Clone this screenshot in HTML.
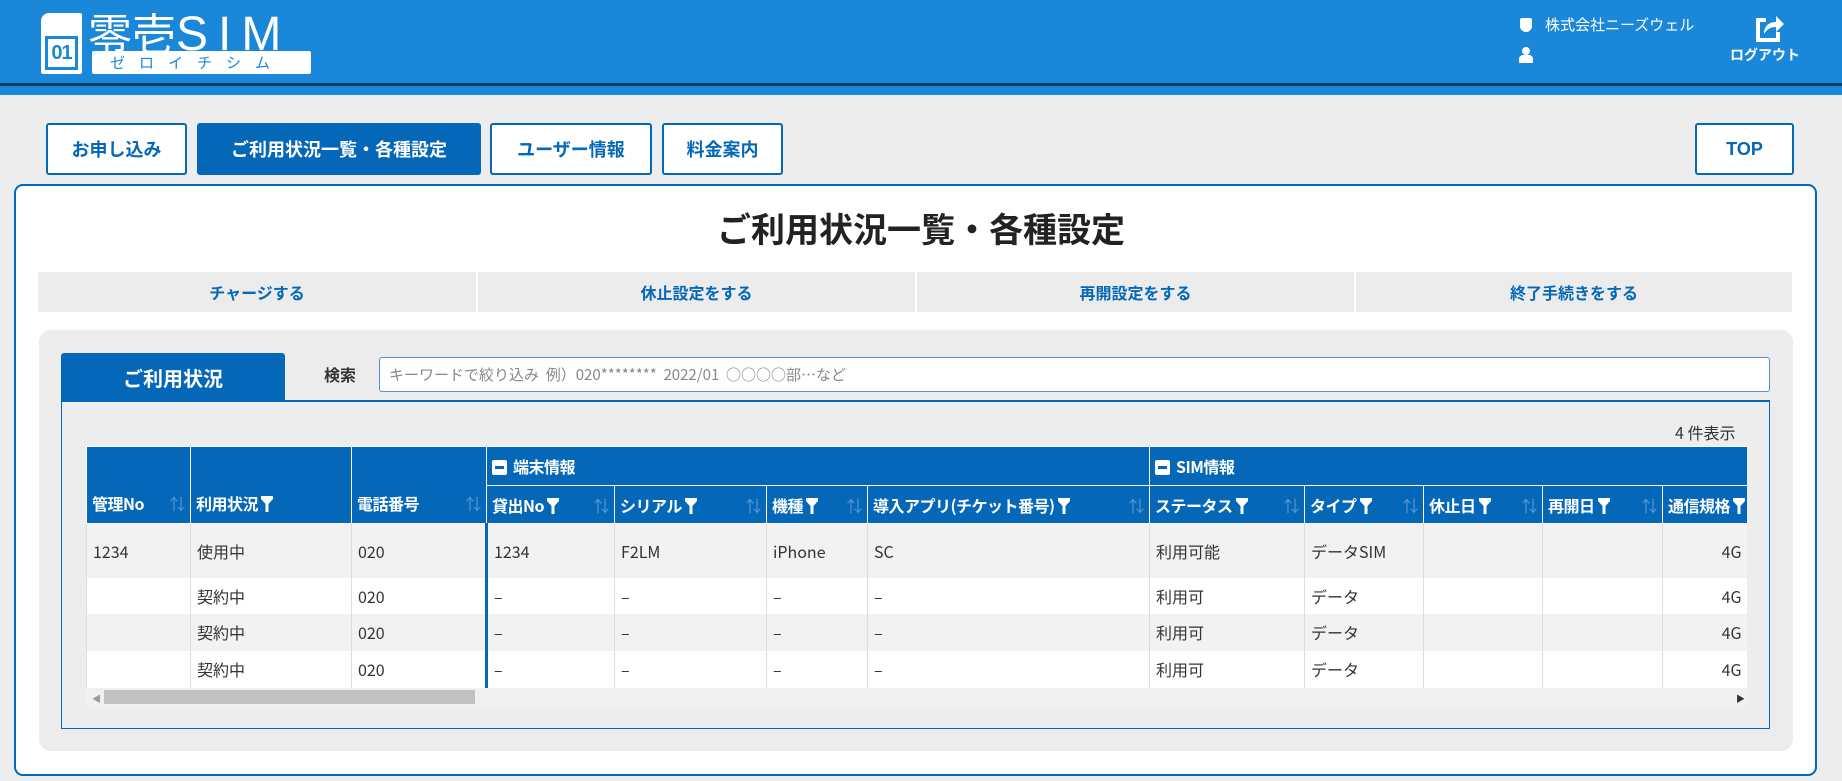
<!DOCTYPE html>
<html><head><meta charset="utf-8"><style>
*{box-sizing:border-box;margin:0;padding:0}
body{width:1842px;height:781px;background:#ededed;font-family:"Noto Sans CJK JP","Liberation Sans",sans-serif;position:relative;overflow:hidden;color:#333}
.a{position:absolute}
.hdr{left:0;top:0;width:1842px;height:83px;background:#1b87d8}
.btn{position:absolute;top:123px;height:52px;border:2px solid #0567b8;border-radius:3px;background:#fff;color:#0567b8;font-weight:bold;font-size:18px;display:flex;align-items:center;justify-content:center}
.btn.on{background:#0567b8;color:#fff}
.bar div{position:absolute;top:0;height:40px;background:#ececec;color:#0567b8;font-weight:bold;font-size:16px;display:flex;align-items:center;justify-content:center}
table{border-collapse:collapse;position:absolute;left:86px;top:446px;table-layout:fixed;width:1661px}
th{background:#0567b8;color:#fff;font-size:16px;font-weight:bold;text-align:left;padding:0 5px;border:1px solid #fff;white-space:nowrap;overflow:hidden;letter-spacing:-0.5px}
td{font-size:16px;line-height:20px;padding:0 6px;border-left:1px solid #ddd;white-space:nowrap;overflow:hidden;color:#333}
tr.g td{background:#f2f2f2}tr.w td{background:#fff}
.s{color:#5a9ad0;font-weight:normal;float:right}
.fn{display:inline-block;width:12px;height:16px;vertical-align:-2px;margin-left:3px}
.m{display:inline-block;width:15px;height:15px;background:#fff;border-radius:2px;vertical-align:-2px;margin-right:6px;position:relative}
.m:after{content:"";position:absolute;left:3px;top:6px;width:9px;height:3px;background:#0567b8}
</style></head><body>
<svg width="0" height="0" style="position:absolute"><defs><symbol id="fu" viewBox="0 0 12 16"><path d="M0 0h12v3L7.5 8v8h-3V8L0 3z" fill="#fff"/></symbol></defs></svg>
<div class="a hdr"></div>
<div class="a" style="left:0;top:83px;width:1842px;height:3px;background:#0d3f66"></div>
<div class="a" style="left:0;top:86px;width:1842px;height:9px;background:#1b87d8"></div>
<!-- logo -->
<div class="a" style="left:41px;top:13px;width:41px;height:61px;background:#fff;border-radius:8px 2px 2px 2px"></div>
<div class="a" style="left:45px;top:36px;width:33px;height:34px;border:3px solid #1b87d8;color:#1b87d8;font-weight:bold;font-size:20px;line-height:28px;text-align:center;letter-spacing:-1px;font-family:'Liberation Sans',sans-serif">01</div>
<div class="a" style="left:88px;top:6px;font-size:44px;color:#fff;line-height:50px;letter-spacing:0px">零壱<span style="font-family:'Liberation Sans',sans-serif;font-weight:normal;letter-spacing:10px;font-size:48px">SIM</span></div>
<div class="a" style="left:92px;top:51px;width:219px;height:23px;background:#fff;border-radius:2px;color:#1b87d8;font-size:15px;line-height:23px;letter-spacing:14px;padding-left:18px">ゼロイチシム</div>
<!-- user -->
<div class="a" style="left:1520px;top:18px;width:12px;height:14px;background:#fff;border-radius:2px 2px 6px 6px"></div>
<div class="a" style="left:1545px;top:14px;color:#fff;font-size:15px">株式会社ニーズウェル</div>
<div class="a" style="left:1522px;top:47px;width:8px;height:8px;background:#fff;border-radius:50%"></div>
<div class="a" style="left:1519px;top:55px;width:14px;height:8px;background:#fff;border-radius:4px 4px 1px 1px"></div>
<svg class="a" style="left:1752px;top:12px" width="32" height="32" viewBox="0 0 32 32"><path d="M4 6h10v4H8v16h16v-6h4v10H4z" fill="#fff"/><path d="M12 22c0-8 5-12 12-12V4l8 8-8 8v-5c-5 0-9 2-12 7z" fill="#fff"/></svg>
<div class="a" style="left:1730px;top:45px;color:#fff;font-size:14px;font-weight:bold">ログアウト</div>
<!-- nav -->
<div class="btn" style="left:46px;width:141px">お申し込み</div>
<div class="btn on" style="left:197px;width:284px">ご利用状況一覧・各種設定</div>
<div class="btn" style="left:490px;width:162px">ユーザー情報</div>
<div class="btn" style="left:662px;width:121px">料金案内</div>
<div class="btn" style="left:1695px;width:99px;font-family:'Liberation Sans',sans-serif">TOP</div>
<!-- card -->
<div class="a" style="left:14px;top:184px;width:1803px;height:592px;background:#fff;border:2px solid #0567b8;border-radius:9px"></div>
<div class="a" style="left:0;top:203px;width:1842px;text-align:center;font-size:34px;font-weight:bold;color:#222">ご利用状況一覧・各種設定</div>
<div class="a bar" style="left:38px;top:272px">
<div style="left:0;width:438px">チャージする</div>
<div style="left:440px;width:437px">休止設定をする</div>
<div style="left:879px;width:437px">再開設定をする</div>
<div style="left:1318px;width:436px">終了手続きをする</div>
</div>
<div class="a" style="left:39px;top:330px;width:1754px;height:421px;background:#ececec;border-radius:12px"></div>
<div class="a" style="left:61px;top:353px;width:224px;height:48px;background:#0567b8;color:#fff;font-weight:bold;font-size:20px;display:flex;align-items:center;justify-content:center;border-radius:3px 3px 0 0">ご利用状況</div>
<div class="a" style="left:324px;top:362px;font-weight:bold;font-size:16px;color:#333">検索</div>
<div class="a" style="left:379px;top:357px;width:1391px;height:35px;background:#fff;border:1px solid #4e93d1;border-radius:3px;color:#888;font-size:15px;line-height:33px;padding-left:9px">キーワードで絞り込み&nbsp; 例）020********&nbsp; 2022/01&nbsp; ○○○○部…など</div>
<div class="a" style="left:61px;top:400px;width:1709px;height:329px;border:1px solid #0567b8;border-top:2px solid #0567b8;background:#ededed"></div>
<div class="a" style="left:1675px;top:420px;font-size:16px;color:#333">4 件表示</div>
<div class="a" style="left:86px;top:446px;width:1661px;height:260px;overflow:hidden">
<table style="left:0;top:0">
<colgroup><col style="width:104px"><col style="width:161px"><col style="width:135px"><col style="width:128px"><col style="width:152px"><col style="width:101px"><col style="width:282px"><col style="width:155px"><col style="width:119px"><col style="width:119px"><col style="width:120px"><col style="width:85px"></colgroup>
<tr style="height:39px"><th rowspan="2" style="vertical-align:bottom;padding-bottom:8px">管理No<span class="s">⇅</span></th><th rowspan="2" style="vertical-align:bottom;padding-bottom:8px">利用状況<svg class="fn"><use href="#fu"/></svg></th><th rowspan="2" style="vertical-align:bottom;padding-bottom:8px">電話番号<span class="s">⇅</span></th><th colspan="4"><span class="m"></span>端末情報</th><th colspan="5"><span class="m"></span>SIM情報</th></tr>
<tr style="height:38px"><th>貸出No<svg class="fn"><use href="#fu"/></svg><span class="s">⇅</span></th><th>シリアル<svg class="fn"><use href="#fu"/></svg><span class="s">⇅</span></th><th>機種<svg class="fn"><use href="#fu"/></svg><span class="s">⇅</span></th><th>導入アプリ(チケット番号)<svg class="fn"><use href="#fu"/></svg><span class="s">⇅</span></th><th>ステータス<svg class="fn"><use href="#fu"/></svg><span class="s">⇅</span></th><th>タイプ<svg class="fn"><use href="#fu"/></svg><span class="s">⇅</span></th><th>休止日<svg class="fn"><use href="#fu"/></svg><span class="s">⇅</span></th><th>再開日<svg class="fn"><use href="#fu"/></svg><span class="s">⇅</span></th><th>通信規格<svg class="fn"><use href="#fu"/></svg></th></tr>
<tr class="g" style="height:54px"><td>1234</td><td>使用中</td><td>020</td><td style="border-left:3px solid #0567b8">1234</td><td>F2LM</td><td>iPhone</td><td>SC</td><td>利用可能</td><td>データSIM</td><td></td><td></td><td style="text-align:right">4G</td></tr>
<tr class="w" style="height:36px"><td></td><td>契約中</td><td>020</td><td style="border-left:3px solid #0567b8">–</td><td>–</td><td>–</td><td>–</td><td>利用可</td><td>データ</td><td></td><td></td><td style="text-align:right">4G</td></tr>
<tr class="g" style="height:37px"><td></td><td>契約中</td><td>020</td><td style="border-left:3px solid #0567b8">–</td><td>–</td><td>–</td><td>–</td><td>利用可</td><td>データ</td><td></td><td></td><td style="text-align:right">4G</td></tr>
<tr class="w" style="height:37px"><td></td><td>契約中</td><td>020</td><td style="border-left:3px solid #0567b8">–</td><td>–</td><td>–</td><td>–</td><td>利用可</td><td>データ</td><td></td><td></td><td style="text-align:right">4G</td></tr>
</table>
<div class="a" style="left:0;top:242px;width:1661px;height:18px;background:#f0f0f0"></div>
<div class="a" style="left:18px;top:244px;width:371px;height:14px;background:#c1c1c1"></div>
<div class="a" style="left:6px;top:246px;font-size:9px;color:#999">◀</div>
<div class="a" style="left:1650px;top:246px;font-size:9px;color:#333">▶</div>
</div>
</body></html>
